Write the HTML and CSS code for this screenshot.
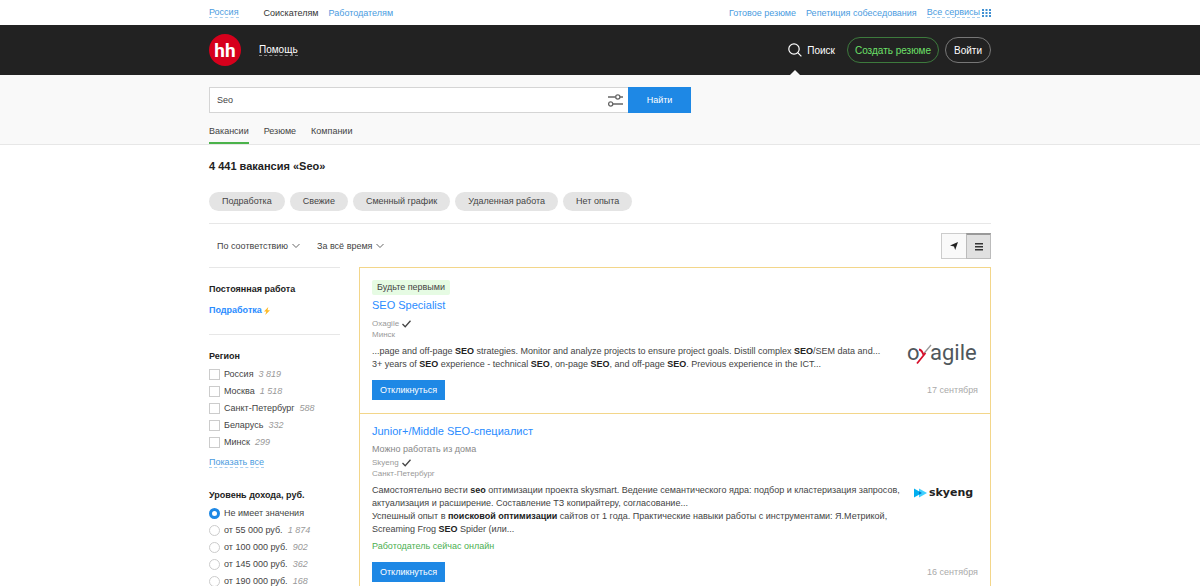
FILE: index.html
```html
<!DOCTYPE html>
<html lang="ru">
<head>
<meta charset="utf-8">
<meta name="viewport" content="width=device-width, initial-scale=1">
<title>4 441 вакансия «Seo»</title>
<link rel="stylesheet" href="styles.css">
</head>
<body>
<div class="topbar">
  <nav class="wrap topbar-row">
    <a class="dashed region-link" href="#">Россия</a>
    <a class="current" href="#">Соискателям</a>
    <a href="#">Работодателям</a>
    <span class="spacer"></span>
    <a class="resume-link" href="#">Готовое резюме</a>
    <a class="rehearsal-link" href="#">Репетиция собеседования</a>
    <a class="services" href="#"><span class="dashed">Все сервисы</span>
      <svg width="9" height="8" viewBox="0 0 9 8" fill="#3f8fd2"><path d="M0 0h2v2H0zM3.500 0h2v2h-2zM7 0h2v2H7zM0 3h2v2H0zM3.500 3h2v2h-2zM7 3h2v2H7zM0 6h2v2H0zM3.500 6h2v2h-2zM7 6h2v2H7z"/></svg></a>
  </nav>
</div>
<header class="header">
  <div class="wrap header-row">
    <a class="logo" href="#">hh</a>
    <a class="help" href="#">Помощь</a>
    <span class="spacer"></span>
    <a class="find" href="#">
      <svg width="14" height="14" viewBox="0 0 14 14" fill="none" stroke="#fff" stroke-width="1.200"><circle cx="6" cy="6" r="5.200"/><path d="M9.700 9.700l3.700 3.700"/></svg>
      Поиск</a>
    <button class="pill pill-green" type="button">Создать резюме</button>
    <button class="pill" type="button">Войти</button>
  </div>
</header>
<section class="search">
  <div class="wrap">
    <form class="search-form">
      <div class="search-field">
        <input type="text" value="Seo" aria-label="Поиск вакансий">
        <button class="filter" type="button" aria-label="Расширенный поиск">
          <svg width="15" height="14" viewBox="0 0 15 14" fill="none" stroke="#666" stroke-width="1.300"><path d="M0 4h7.500M12 4h3M0 11h.5M5 11h10"/><circle cx="9.800" cy="4" r="2.100"/><circle cx="2.700" cy="11" r="2.100"/></svg>
        </button>
      </div>
      <button class="submit" type="button">Найти</button>
    </form>
    <nav class="tabs">
      <a class="active" href="#">Вакансии</a>
      <a href="#">Резюме</a>
      <a href="#">Компании</a>
    </nav>
  </div>
</section>
<main class="wrap">
  <h1>4 441 вакансия «Seo»</h1>
  <div class="chips">
    <button type="button">Подработка</button>
    <button type="button">Свежие</button>
    <button type="button">Сменный график</button>
    <button type="button">Удаленная работа</button>
    <button type="button">Нет опыта</button>
  </div>
  <div class="toolbar">
    <span class="select"><select aria-label="Сортировка"><option>По соответствию</option></select>
      <svg width="8" height="6" viewBox="0 0 8 6" fill="none" stroke="#666"><path d="M.5 1L4 4.500 7.500 1"/></svg></span>
    <span class="select"><select aria-label="Период"><option>За всё время</option></select>
      <svg width="8" height="6" viewBox="0 0 8 6" fill="none" stroke="#666"><path d="M.5 1L4 4.500 7.500 1"/></svg></span>
    <span class="spacer"></span>
    <div class="views">
      <button type="button" aria-label="На карте"><svg width="8" height="8" viewBox="0 0 8 8" fill="#222"><path d="M8 0L5.200 8 4 4.600 0 3.400z"/></svg></button>
      <button class="on" type="button" aria-label="Списком"><svg width="8" height="8" viewBox="0 0 8 8" fill="#333"><path d="M0 0h8v1.500H0zM0 3h8v1.500H0zM0 6h8v1.500H0z"/></svg></button>
    </div>
  </div>
  <div class="columns">
    <aside class="sidebar">
      <section class="group">
        <h2>Постоянная работа</h2>
        <a class="side-job" href="#">Подработка <svg width="6" height="8" viewBox="0 0 6 8" fill="#ffb921"><path d="M4.300 0L0 4.400h2.300L1.200 8 6 3.300H3.500z"/></svg></a>
      </section>
      <fieldset class="group region">
        <legend>Регион</legend>
        <label><input type="checkbox"><span>Россия</span><i>3 819</i></label>
        <label><input type="checkbox"><span>Москва</span><i>1 518</i></label>
        <label><input type="checkbox"><span>Санкт-Петербург</span><i>588</i></label>
        <label><input type="checkbox"><span>Беларусь</span><i>332</i></label>
        <label><input type="checkbox"><span>Минск</span><i>299</i></label>
        <a class="dashed show-all" href="#">Показать все</a>
      </fieldset>
      <fieldset class="income">
        <legend>Уровень дохода, руб.</legend>
        <label><input type="radio" name="income" checked><span>Не имеет значения</span></label>
        <label><input type="radio" name="income"><span>от 55 000 руб.</span><i>1 874</i></label>
        <label><input type="radio" name="income"><span>от 100 000 руб.</span><i>902</i></label>
        <label><input type="radio" name="income"><span>от 145 000 руб.</span><i>362</i></label>
        <label><input type="radio" name="income"><span>от 190 000 руб.</span><i>168</i></label>
      </fieldset>
    </aside>
    <div class="results">
      <article class="vacancy">
        <span class="badge">Будьте первыми</span>
        <h3><a href="#">SEO Specialist</a></h3>
        <p class="employer">Oxagile <svg width="9" height="8" viewBox="0 0 9 8" fill="none" stroke="#444" stroke-width="1.300"><path d="M.5 4l2.700 2.700L8.500.8"/></svg></p>
        <p class="employer">Минск</p>
        <div class="body">
          <div class="snippet">
            <p>...page and off-page <b>SEO</b> strategies. Monitor and analyze projects to ensure project goals. Distill complex <b>SEO</b>/SEM data and...</p>
            <p>3+ years of <b>SEO</b> experience - technical <b>SEO</b>, on-page <b>SEO</b>, and off-page <b>SEO</b>. Previous experience in the ICT...</p>
          </div>
          <svg class="brand" width="71" height="26" viewBox="0 0 71 26" role="img" aria-label="oxagile">
            <text class="oxagile" x="0" y="15">o</text><text class="oxagile" x="23" y="15">agile</text>
            <path d="M24 0L16.500 9" stroke="#999" stroke-width="1.300"/><path d="M12 4.500q3 .5 4.500 5.500M18.500 8L10 18.500" fill="none" stroke="#d6102b" stroke-width="1.800"/>
          </svg>
        </div>
        <div class="foot"><button class="respond" type="button">Откликнуться</button><time>17 сентября</time></div>
      </article>
      <article class="vacancy">
        <h3><a href="#">Junior+/Middle SEO-специалист</a></h3>
        <p class="remote">Можно работать из дома</p>
        <p class="employer">Skyeng <svg width="9" height="8" viewBox="0 0 9 8" fill="none" stroke="#444" stroke-width="1.300"><path d="M.5 4l2.700 2.700L8.500.8"/></svg></p>
        <p class="employer">Санкт-Петербург</p>
        <div class="body">
          <div class="snippet">
            <p>Самостоятельно вести <b>seo</b> оптимизации проекта skysmart. Ведение семантического ядра: подбор и кластеризация запросов, актуализация и расширение. Составление ТЗ копирайтеру, согласование...</p>
            <p>Успешный опыт в <b>поисковой оптимизации</b> сайтов от 1 года. Практические навыки работы с инструментами: Я.Метрикой, Screaming Frog <b>SEO</b> Spider (или...</p>
          </div>
          <svg class="brand brand-sky" width="60" height="18" viewBox="0 0 60 18" role="img" aria-label="skyeng">
            <path d="M0 4.500l8 4.500-8 4.500z" fill="#00aeef"/><path d="M5 4.500l8 4.500-8 4.500z" fill="#3fd0ff"/><path d="M5 7.300L8 9 5 10.700z" fill="#0079c9"/>
            <text class="skyeng" x="15" y="12">skyeng</text>
          </svg>
        </div>
        <p class="online">Работодатель сейчас онлайн</p>
        <div class="foot"><button class="respond" type="button">Откликнуться</button><time>16 сентября</time></div>
      </article>
    </div>
  </div>
</main>
</body>
</html>
```
FILE: styles.css
```css
* { box-sizing: border-box; }
body {
  margin: 0;
  background: #fff;
  color: #444;
  font: 9px/13px "Liberation Sans", Arial, sans-serif;
}
h1, h2, h3, p, fieldset, legend { margin: 0; padding: 0; border: 0; }
a { color: #4a9be0; text-decoration: none; }
button, input, select { font: inherit; color: inherit; margin: 0; }
button { cursor: pointer; padding: 0; border: 0; }
svg { flex: none; }
.wrap { width: 100%; max-width: 782px; margin: 0 auto; }
.spacer { flex: 1; }
.dashed { border-bottom: 1px dashed #a9cff0; }

.topbar-row { display: flex; align-items: center; height: 25px; line-height: 10px; gap: 10px; }
.topbar .current { color: #333; }
.region-link { margin-right: 15px; }
.services { display: flex; align-items: center; gap: 2px; }

.header { background: #222; }
.header-row { display: flex; align-items: center; height: 50px; font-size: 10px; }
.header a { color: #fff; }
.header .logo {
  display: flex; justify-content: center; align-items: center;
  width: 32px; height: 32px; margin-right: 18px;
  border-radius: 50%; background: #d6001c;
  font: bold 19px/19px Roboto, sans-serif;
}
.help { line-height: 11px; border-bottom: 1px dashed #888; }
.find { position: relative; display: flex; align-items: center; gap: 5px; height: 50px; margin-right: 12px; }
.find::after {
  content: ""; position: absolute; left: 2px; bottom: 0;
  border: 5px solid transparent; border-top: 0; border-bottom-color: #f9f9f9;
}
.pill { height: 26px; padding: 0 8px; border: 1px solid #777; border-radius: 13px; background: none; color: #fff; }
.pill-green { margin-right: 6px; padding: 0 7px; border-color: #3d7a3d; color: #6de069; }

.search { background: #f9f9f9; border-bottom: 1px solid #e7e7e7; padding-top: 12px; }
.search-form { display: flex; max-width: 482px; height: 26px; }
.search-field { display: flex; flex: 1; background: #fff; border: 1px solid #d5d5d5; border-right: 0; }
.search-field input { flex: 1; min-width: 0; padding: 0 7px; border: 0; outline: 0; background: none; }
.filter { display: flex; align-items: center; padding: 0 5px; background: none; }
.submit { width: 63px; background: #1e88e5; color: #fff; }
.tabs { display: flex; gap: 15px; margin-top: 12px; }
.tabs a { padding-bottom: 4px; border-bottom: 2px solid transparent; color: #444; }
.tabs .active { border-color: #4bb34b; }

h1 { margin-top: 13px; color: #222; font-size: 11px; line-height: 16px; }
.chips { display: flex; gap: 5px; margin-top: 18px; padding-bottom: 12px; border-bottom: 1px solid #e7e7e7; }
.chips button { height: 19px; padding: 0 13px; border-radius: 10px; background: #e4e4e4; }
.toolbar { display: flex; align-items: center; gap: 17px; margin-top: 9px; padding-left: 8px; }
.select { display: flex; align-items: center; gap: 3px; }
.select select { appearance: none; padding: 0; border: 0; background: none; }
.views { display: flex; }
.views button {
  display: flex; justify-content: center; align-items: center;
  width: 25px; height: 26px; border: 1px solid #ccc; border-right: 0; background: #f9f9f9;
}
.views .on { border: 1px solid #bbb; border-top: 2px solid #999; background: #e0e0e0; }

.columns { display: flex; align-items: flex-start; gap: 19px; margin-top: 8px; }
.sidebar { flex: none; width: 131px; }
.group { border-top: 1px solid #e7e7e7; }
.sidebar h2, .sidebar legend { color: #222; font-size: 9px; font-weight: bold; line-height: 13px; }
.sidebar h2 { margin-top: 15px; }
.side-job { display: flex; align-items: center; gap: 2px; margin: 8px 0 17px; color: #2a8cff; font-weight: bold; }
.sidebar legend { float: left; width: 100%; }
.region { padding-top: 15px; }
.region legend, .income legend { margin-bottom: 3px; }
.sidebar label { clear: both; display: flex; align-items: center; height: 17px; }
.sidebar label i { margin-left: 5px; color: #999; }
.sidebar input { appearance: none; flex: none; width: 11px; height: 11px; margin-right: 4px; border: 1px solid #ccc; background: #fff; }
.sidebar input[type="radio"] { border-radius: 50%; }
.sidebar input[type="radio"]:checked { border: 3px solid #1e88e5; }
.show-all { display: inline-block; margin-top: 6px; line-height: 10px; }
.income { margin-top: 20px; }

.results { flex: 1; min-width: 0; border: 1px solid #f3d68a; }
.vacancy { padding: 12px 12px 13px; }
.vacancy + .vacancy { border-top: 1px solid #f3d68a; padding-top: 7px; }
.badge { display: inline-block; height: 15px; padding: 0 5px; border-radius: 2px; background: #e6fbe3; line-height: 15px; vertical-align: top; }
.vacancy h3 { margin-top: 3px; font-size: 11px; font-weight: normal; line-height: 15px; }
.vacancy h3 a { color: #2a8cff; }
.employer { display: flex; align-items: center; gap: 3px; color: #999; font-size: 8px; line-height: 11px; }
h3 + .employer { margin-top: 5px; }
.remote { margin-top: 5px; color: #888; line-height: 11px; }
.remote + .employer { margin-top: 2px; }
.body { display: flex; justify-content: space-between; margin-top: 5px; }
.snippet { max-width: 530px; }
.snippet b { color: #222; }
.online { margin-top: 4px; color: #4caf50; }
.foot { display: flex; align-items: center; justify-content: space-between; margin-top: 9px; }
.respond { height: 20px; padding: 0 8px; background: #1e88e5; color: #fff; }
.foot time { color: #aaa; }
.brand { overflow: visible; }
.brand-sky { margin-right: 4px; }
.oxagile { font: 22px Roboto, sans-serif; fill: #50575c; }
.skyeng { font: bold 11px "DejaVu Sans", sans-serif; fill: #222; }
```
